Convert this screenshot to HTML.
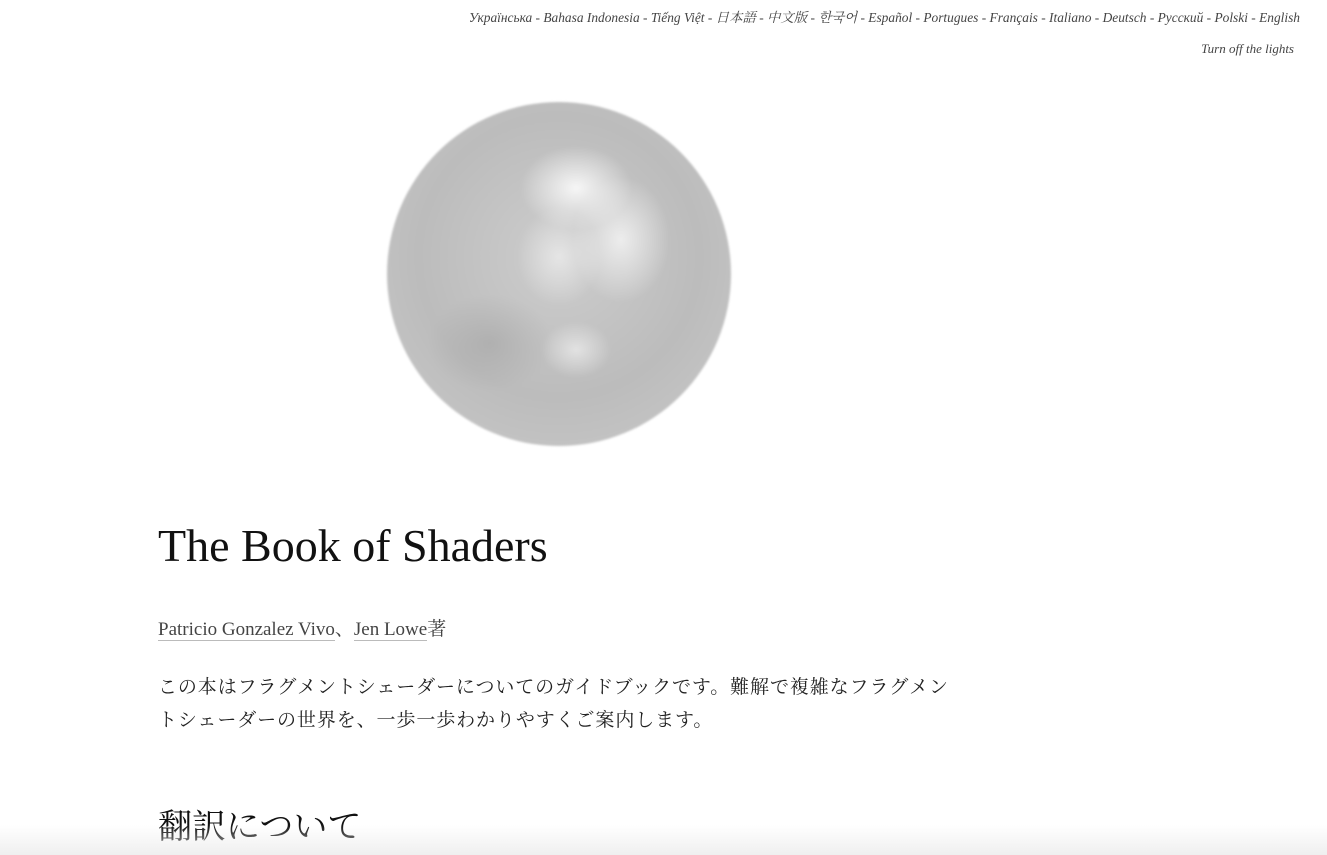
<!DOCTYPE html>
<html><head><meta charset="utf-8"><style>
html,body{margin:0;padding:0;background:#fff;width:1327px;height:855px;overflow:hidden;position:relative}
body{font-family:"Liberation Serif","Noto Serif CJK SC",serif;color:#222}
.langs{position:absolute;right:27px;top:7px;font-size:13.4px;font-style:italic;color:#444;white-space:nowrap;font-family:"Liberation Serif","Noto Serif CJK SC",serif}
.lights{position:absolute;right:33px;top:41px;font-size:13px;font-style:italic;color:#444}
.moon{position:absolute;left:387px;top:102px;width:344px;height:344px;border-radius:50%;
background:
radial-gradient(ellipse 80px 60px at 55% 25%,rgba(255,255,255,.85),rgba(255,255,255,0) 70%),
radial-gradient(ellipse 70px 90px at 68% 40%,rgba(250,250,250,.75),rgba(255,255,255,0) 70%),
radial-gradient(ellipse 60px 70px at 50% 45%,rgba(245,245,245,.6),rgba(255,255,255,0) 70%),
radial-gradient(ellipse 50px 40px at 55% 72%,rgba(240,240,240,.7),rgba(255,255,255,0) 70%),
radial-gradient(ellipse 90px 70px at 30% 70%,rgba(140,140,140,.3),rgba(255,255,255,0) 70%),
radial-gradient(circle at 50% 45%,#cdcdcd 0%,#bcbcbc 55%,#c6c6c6 85%,#eeeeee 98%,#fff 100%);
filter:blur(1px)}
h1{position:absolute;left:158px;top:519px;margin:0;font-weight:normal;font-size:46px;color:#111}
.by{position:absolute;left:158px;top:614px;font-size:19px;color:#444}
.by a{color:#444;text-decoration:none;border-bottom:1px solid #bbb}
p{position:absolute;left:158px;top:671px;margin:0;width:800px;font-size:19px;line-height:33px;color:#222;letter-spacing:0.9px}
h2{position:absolute;left:158px;top:799px;margin:0;font-weight:normal;font-size:34px;color:#111}
.fade{position:absolute;left:0;right:0;bottom:0;height:30px;background:linear-gradient(rgba(240,240,240,0),rgba(235,235,235,.8))}
</style></head><body>
<div class="langs">Українська - Bahasa Indonesia - Tiếng Việt - 日本語 - 中文版 - 한국어 - Español - Portugues - Français - Italiano - Deutsch - Русский - Polski - English</div>
<div class="lights">Turn off the lights</div>
<div class="moon"></div>
<h1>The Book of Shaders</h1>
<div class="by"><a>Patricio Gonzalez Vivo</a>、<a>Jen Lowe</a>著</div>
<p>この本はフラグメントシェーダーについてのガイドブックです。難解で複雑なフラグメントシェーダーの世界を、一歩一歩わかりやすくご案内します。</p>
<h2>翻訳について</h2>
<div class="fade"></div>
</body></html>
